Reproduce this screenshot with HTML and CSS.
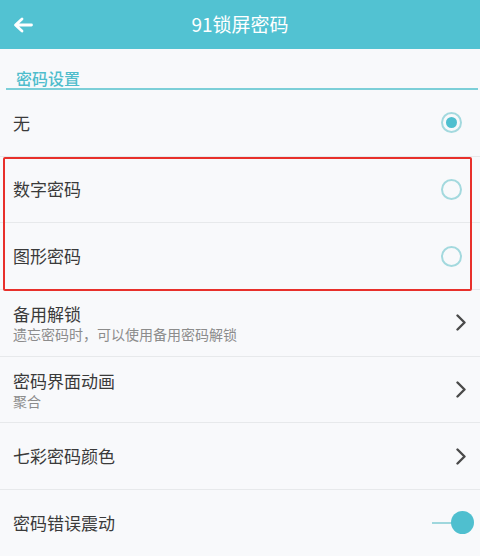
FILE: index.html
```html
<!DOCTYPE html>
<html lang="zh-CN">
<head>
<meta charset="utf-8">
<title>91锁屏密码</title>
<link rel="stylesheet" href="styles.css">
</head>
<body>
<div class="app">
  <header class="topbar">
    <svg class="back" width="20" height="16" viewBox="0 0 20 16"><path d="M18.5 8H3M9 2L2.5 8L9 14" fill="none" stroke="#fff" stroke-width="2.8" stroke-linecap="round" stroke-linejoin="round"/></svg>
    <h1 class="title">91锁屏密码</h1>
  </header>
  <div class="section">密码设置</div>
  <div class="row">
    <span class="label">无</span>
    <span class="radio on"></span>
  </div>
  <div class="group">
    <div class="row">
      <span class="label">数字密码</span>
      <span class="radio"></span>
    </div>
    <div class="row">
      <span class="label">图形密码</span>
      <span class="radio"></span>
    </div>
  </div>
  <div class="row">
    <div class="text two">
      <span class="label">备用解锁</span>
      <span class="sub">遗忘密码时，可以使用备用密码解锁</span>
    </div>
    <svg class="chev" width="12" height="17" viewBox="0 0 12 17"><path d="M2.5 1.5L9.5 8.5L2.5 15.5" fill="none" stroke="#4a4a4a" stroke-width="2.4" stroke-linecap="round" stroke-linejoin="round"/></svg>
  </div>
  <div class="row">
    <div class="text two">
      <span class="label">密码界面动画</span>
      <span class="sub">聚合</span>
    </div>
    <svg class="chev" width="12" height="17" viewBox="0 0 12 17"><path d="M2.5 1.5L9.5 8.5L2.5 15.5" fill="none" stroke="#4a4a4a" stroke-width="2.4" stroke-linecap="round" stroke-linejoin="round"/></svg>
  </div>
  <div class="row">
    <span class="label">七彩密码颜色</span>
    <svg class="chev" width="12" height="17" viewBox="0 0 12 17"><path d="M2.5 1.5L9.5 8.5L2.5 15.5" fill="none" stroke="#4a4a4a" stroke-width="2.4" stroke-linecap="round" stroke-linejoin="round"/></svg>
  </div>
  <div class="row">
    <span class="label">密码错误震动</span>
    <span class="toggle"><span class="track"></span><span class="thumb"></span></span>
  </div>
</div>
</body>
</html>
```

FILE: styles.css
```css
html, body {
  margin: 0;
  padding: 0;
}
body {
  background: #f8f9fb;
  font-family: "Noto Sans CJK SC", "Noto Sans", sans-serif;
  color: #3a3a3a;
  width: 480px;
  height: 556px;
  overflow: hidden;
}
.app {
  display: flex;
  flex-direction: column;
}
.topbar {
  height: 49px;
  background: #52c2d2;
  display: flex;
  align-items: center;
  position: relative;
}
.back {
  margin-left: 13px;
  flex: none;
}
.title {
  margin: 0;
  flex: 1;
  text-align: center;
  color: #fff;
  font-size: 19px;
  font-weight: 400;
  line-height: 24px;
  margin-right: 33px;
  margin-top: -1px;
}
.section {
  margin: 0 2px 0 6px;
  padding: 20px 0 0 10px;
  line-height: 19px;
  font-size: 16px;
  font-weight: 500;
  color: #4fbdcc;
  border-bottom: 2px solid #7ccfd8;
}
.row {
  box-sizing: border-box;
  height: 66.67px;
  border-bottom: 1px solid #e7e9eb;
  display: flex;
  align-items: center;
  padding: 0 6px 0 13px;
  flex: none;
}
.label {
  font-size: 17px;
  line-height: 22px;
  flex: 1;
}
.text {
  flex: 1;
  display: flex;
  flex-direction: column;
  gap: 0;
}
.text.two {
  padding-top: 2px;
}
.text .label {
  flex: none;
  display: block;
}
.sub {
  display: block;
  font-size: 14px;
  line-height: 19px;
  color: #8c8c8c;
}
.radio {
  box-sizing: border-box;
  width: 21px;
  height: 21px;
  border: 2px solid #a3d9de;
  border-radius: 50%;
  margin-right: 12px;
  flex: none;
  display: flex;
  align-items: center;
  justify-content: center;
}
.radio.on::after {
  content: "";
  width: 11px;
  height: 11px;
  border-radius: 50%;
  background: #4fbfcf;
}
.chev {
  margin-right: 7px;
  flex: none;
}
.toggle {
  width: 42px;
  height: 23px;
  display: flex;
  align-items: center;
  flex: none;
}
.track {
  width: 22px;
  height: 2px;
  background: #9fd7dd;
}
.thumb {
  width: 23px;
  height: 23px;
  border-radius: 50%;
  background: #4fbfcf;
  margin-left: -3px;
}
.group {
  position: relative;
  display: flex;
  flex-direction: column;
}
.group::after {
  content: "";
  position: absolute;
  left: 3px;
  right: 8px;
  top: 0;
  bottom: -1px;
  border: 2px solid #e8302b;
  border-radius: 2px;
  pointer-events: none;
}
```
